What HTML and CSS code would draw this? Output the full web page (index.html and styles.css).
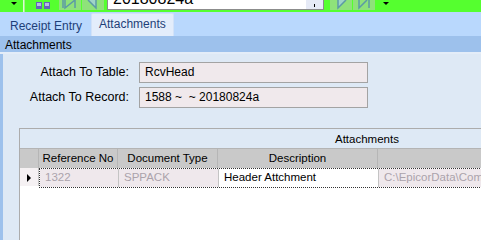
FILE: index.html
```html
<!DOCTYPE html>
<html lang="en">

<head>
  <meta charset="UTF-8">
  <title>Receipt Entry - Attachments</title>
  <link rel="stylesheet" href="styles.css">
</head>

<body>
  <div class="toolbar">
    <span class="drop"></span>
    <span class="sep"></span>
    <span class="tool icon-grid">
      <svg width="16" height="22" viewBox="0 0 16 22"><rect x="1" y="14" width="6" height="7" fill="#6466b8"/><rect x="9" y="14" width="6" height="7" fill="#6466b8"/><rect x="2" y="15" width="4" height="3" fill="#b8bae8"/><rect x="10" y="15" width="4" height="3" fill="#b8bae8"/></svg>
    </span>
    <span class="tool nav">
      <svg width="22" height="22" viewBox="0 0 22 22"><path d="M4 8 V20 M6 8 V20 L16 12 V20" fill="none" stroke="#5c9aa6" stroke-width="1.5"/></svg>
    </span>
    <span class="tool nav">
      <svg width="22" height="22" viewBox="0 0 22 22"><path d="M14 8 V20 L6 12" fill="#9fd4c8" stroke="#5c9aa6" stroke-width="1.5"/></svg>
    </span>
    <div class="recbox">
      <span class="rectext">20180824a</span>
      <span class="recbtn">
        <span class="tick"></span>
      </span>
    </div>
    <span class="tool nav">
      <svg width="22" height="22" viewBox="0 0 22 22"><path d="M8 8 V20 L16 12" fill="#9fd4c8" stroke="#5c9aa6" stroke-width="1.5"/></svg>
    </span>
    <span class="tool nav">
      <svg width="22" height="22" viewBox="0 0 22 22"><path d="M6 8 V20 L14 12 M16 8 V20" fill="none" stroke="#5c9aa6" stroke-width="1.5"/></svg>
    </span>
    <span class="drop drop-right"></span>
  </div>

  <div class="tabs">
    <span class="tab">Receipt Entry</span>
    <span class="tab active">Attachments</span>
  </div>

  <div class="section-title">Attachments</div>

  <div class="panel">
    <div class="form">
      <label>Attach To Table:</label>
      <div class="field">RcvHead</div>
      <label>Attach To Record:</label>
      <div class="field">1588 ~ &nbsp;~ 20180824a</div>
    </div>

    <div class="grid">
      <div class="grid-caption">Attachments</div>
      <div class="grid-row head">
        <div class="cell sel"></div>
        <div class="cell c-ref">Reference No</div>
        <div class="cell c-doc">Document Type</div>
        <div class="cell c-desc">Description</div>
        <div class="cell c-path"></div>
      </div>
      <div class="grid-row data">
        <div class="cell sel"><span class="arrow"></span></div>
        <div class="focus">
          <div class="cell c-ref ro">1322</div>
          <div class="cell c-doc ro">SPPACK</div>
          <div class="cell c-desc">Header Attchment</div>
          <div class="cell c-path ro">C:\EpicorData\CompanyData\Attach</div>
        </div>
      </div>
    </div>
  </div>
</body>

</html>
```

FILE: styles.css
```css
* {
  box-sizing: border-box;
}

body {
  margin: 0;
  width: 481px;
  height: 240px;
  overflow: hidden;
  font-family: "Liberation Sans", Arial, sans-serif;
  font-size: 12px;
  color: #000;
  background: #dee9f5;
}

/* toolbar (top part is cut off) */
.toolbar {
  display: flex;
  align-items: flex-end;
  height: 12px;
  overflow: hidden;
  background: #55ff2f;
  padding-bottom: 2px;
}

.toolbar > * {
  flex: none;
}

.drop {
  width: 0;
  height: 0;
  border-left: 3px solid transparent;
  border-right: 3px solid transparent;
  border-top: 3px solid #000;
  margin: 0 6px 3px 11px;
  align-self: center;
}

.drop-right {
  margin-left: 7px;
}

.sep {
  width: 2px;
  height: 12px;
  background: #a8f090;
  border-left: 1px solid #d8ffd0;
  margin-right: 10px;
  margin-bottom: -2px;
}

.tool {
  display: flex;
  height: 22px;
}

.icon-grid {
  width: 24px;
}

.nav {
  width: 22px;
  margin-right: 1px;
  background: #8fe27a;
}

.recbox {
  display: flex;
  width: 217px;
  height: 22px;
  margin: 0 6px 0 2px;
  background: #fff;
  border: 1px solid #8c8c8c;
  border-top: none;
}

.rectext {
  flex: 1;
  padding: 4px 0 0 5px;
  font-size: 16px;
  line-height: 14px;
}

.recbtn {
  width: 17px;
  background: #e6eaf6;
  position: relative;
}

.tick {
  position: absolute;
  left: 8px;
  bottom: 2px;
  width: 1px;
  height: 3px;
  background: #000;
}

/* tabs */
.tabs {
  display: flex;
  align-items: flex-end;
  height: 24px;
  padding-left: 3px;
  background: #b9d8fd;
}

.tab {
  padding: 0 7px;
  height: 22px;
  line-height: 24px;
  color: #1e3f78;
}

.tab.active {
  margin-left: 2px;
  height: 23px;
  line-height: 21px;
  background: #e3edfb;
  border: 1px solid #d2e2f8;
  border-bottom: none;
  border-radius: 2px 2px 0 0;
}

.section-title {
  height: 18px;
  line-height: 18px;
  padding-left: 5px;
  background: #9dc1ec;
  border-bottom: 2px solid #e4edf8;
}

/* panel */
.panel {
  height: 186px;
  padding: 8px 0 0 19px;
  border-left: 3px solid #9dc1ec;
}

.form {
  display: grid;
  grid-template-columns: 107px 229px;
  row-gap: 4px;
  column-gap: 10px;
  margin-bottom: 20px;
  font-size: 12.5px;
}

.form label {
  text-align: right;
  line-height: 20px;
}

.field {
  height: 21px;
  line-height: 19px;
  padding-left: 5px;
  font-size: 12px;
  background: #f0e9ec;
  border: 1px solid #a3a3a3;
}

/* grid */
.grid {
  width: 700px;
  height: 120px;
  margin-left: -3px;
  font-size: 11.5px;
  background: #fff;
  border-left: 1px solid #acacac;
  border-top: 1px solid #acacac;
}

.grid-caption {
  height: 20px;
  line-height: 20px;
  padding-left: 315px;
  background: #dee9f5;
  border-bottom: 1px solid #b4b4b4;
}

.grid-row {
  display: flex;
  height: 19px;
}

.grid-row.head {
  background: #c9c9c9;
}

.cell {
  flex: none;
  height: 19px;
  line-height: 18px;
  white-space: nowrap;
  overflow: hidden;
  border-right: 1px solid #a9a9a9;
}

.head .cell {
  text-align: center;
  border-right-color: #b6b6b6;
}

.sel {
  width: 19px;
}

.c-ref {
  width: 79px;
}

.c-doc {
  width: 100px;
}

.c-desc {
  width: 160px;
}

.c-path {
  width: 320px;
}

.data .sel {
  background: #f5f1f3;
  position: relative;
}

.arrow {
  position: absolute;
  left: 7px;
  top: 6px;
  border-top: 4px solid transparent;
  border-bottom: 4px solid transparent;
  border-left: 4px solid #000;
}

.focus {
  display: flex;
  border: 1px dotted #333;
  height: 20px;
}

.data .cell {
  height: 18px;
  padding-left: 5px;
  line-height: 17px;
  border-right-color: #c4c4c4;
}

.data .ro {
  background: #efe8ec;
  color: #aba3ab;
}
```
